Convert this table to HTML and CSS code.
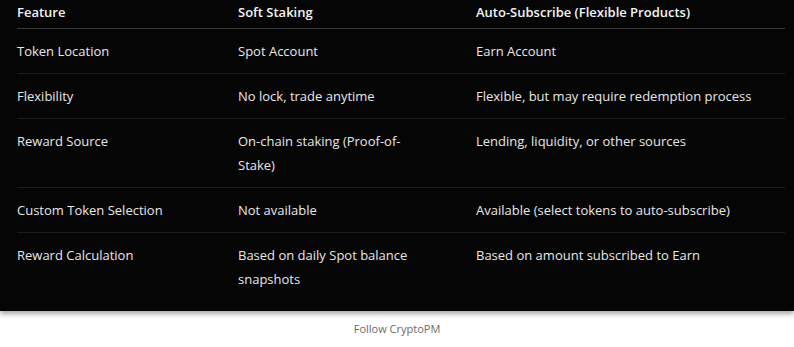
FILE: index.html
```html
<!DOCTYPE html>
<html lang="en">
<head>
<meta charset="utf-8">
<title>Soft Staking vs Auto-Subscribe</title>
<link rel="stylesheet" href="styles.css">
</head>
<body>
<div class="panel">
  <div class="compare">
    <div class="cell head">Feature</div>
    <div class="cell head">Soft Staking</div>
    <div class="cell head">Auto-Subscribe (Flexible Products)</div>

    <div class="cell">Token Location</div>
    <div class="cell">Spot Account</div>
    <div class="cell">Earn Account</div>

    <div class="cell">Flexibility</div>
    <div class="cell">No lock, trade anytime</div>
    <div class="cell">Flexible, but may require redemption process</div>

    <div class="cell">Reward Source</div>
    <div class="cell">On-chain staking (Proof-of-Stake)</div>
    <div class="cell">Lending, liquidity, or other sources</div>

    <div class="cell">Custom Token Selection</div>
    <div class="cell">Not available</div>
    <div class="cell">Available (select tokens to auto-subscribe)</div>

    <div class="cell last">Reward Calculation</div>
    <div class="cell last">Based on daily Spot balance snapshots</div>
    <div class="cell last">Based on amount subscribed to Earn</div>
  </div>
</div>
<p class="caption">Follow CryptoPM</p>
</body>
</html>
```

FILE: styles.css
```css
html, body {
  margin: 0;
  padding: 0;
  background: #ffffff;
}

body {
  font-family: "Segoe UI", "Open Sans", "Noto Sans", sans-serif;
}

.panel {
  background: #050505;
  padding: 0 9px 10px 17px;
  box-shadow: 0 3px 5px rgba(0, 0, 0, 0.35);
}

.compare {
  display: grid;
  grid-template-columns: 221px 238px 1fr;
  color: #e8e8e8;
  font-size: 13px;
  line-height: 24px;
}

.cell {
  padding: 10px 48px 10px 0;
  border-bottom: 1px solid #1c1c1c;
}

/* last column runs to the panel edge */
.cell:nth-child(3n) {
  padding-right: 0;
}

.cell.head {
  padding-top: 0;
  padding-bottom: 4px;
  color: #f4f4f4;
  font-weight: 600;
  border-bottom-color: #3a3a3a;
}

.cell.last {
  border-bottom: none;
}

.caption {
  margin: 10px 0 0;
  text-align: center;
  font-size: 11px;
  color: #6b6b6b;
}
```
